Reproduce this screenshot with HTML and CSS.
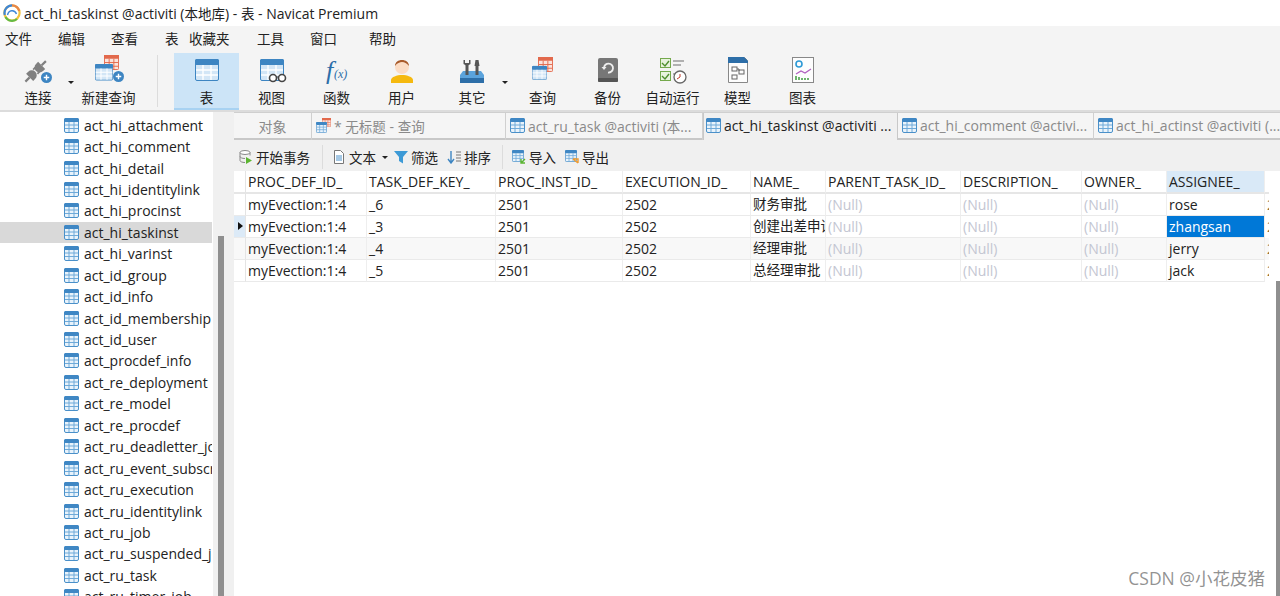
FILE: index.html
```html
<!DOCTYPE html>
<html lang="zh">
<head>
<meta charset="utf-8">
<title>act_hi_taskinst @activiti (本地库) - 表 - Navicat Premium</title>
<link rel="stylesheet" href="styles.css">
</head>
<body>
<svg class="defs" width="0" height="0">
  <symbol id="tbl" viewBox="0 0 15 15">
    <rect x=".5" y=".5" width="14" height="14" rx="1.5" fill="#e9f3fb" stroke="#4a90c9"/>
    <rect x="0" y="0" width="15" height="4" rx="1.5" fill="#3f87c4"/>
    <path d="M1 7h13M1 10.500h13M5 4v10M10 4v10" stroke="#6faad9" stroke-width="1" fill="none"/>
  </symbol>
  <symbol id="bigtbl" viewBox="0 0 24 24">
    <rect x=".5" y=".5" width="23" height="21" rx="1.5" fill="#d3e6f6" stroke="#3d85c2"/>
    <rect x="0" y="0" width="24" height="6" rx="1.500" fill="#3d85c2"/>
    <path d="M1 11h22M1 16h22M8 6v15M16 6v15" stroke="#fff" stroke-width="1.400" fill="none"/>
  </symbol>
  <symbol id="orangetbl" viewBox="0 0 16 16">
    <rect x=".5" y=".5" width="15" height="15" rx="1" fill="#fbe3dc" stroke="#e2694c"/>
    <rect x="0" y="0" width="16" height="4" fill="#e2694c"/>
    <path d="M1 8h14M1 12h14M5.500 4v11M10.500 4v11" stroke="#e2694c" fill="none"/>
  </symbol>
  <symbol id="plus" viewBox="0 0 10 10">
    <circle cx="5" cy="5" r="5" fill="#3d85c2"/>
    <path d="M2.500 5h5M5 2.500v5" stroke="#fff" stroke-width="1.300"/>
  </symbol>
</svg>

<header class="titlebar">
  <svg class="logo" viewBox="0 0 18 18" width="18" height="18">
    <circle cx="9" cy="9" r="7.600" fill="#fff" stroke="#f3c23c" stroke-width="2.200"/>
    <path d="M1.800 11A7.600 7.600 0 0 1 9 1.400" fill="none" stroke="#3e86d8" stroke-width="2.200"/>
    <path d="M9 1.400A7.600 7.600 0 0 1 16.200 7" fill="none" stroke="#e8864a" stroke-width="2.200"/>
    <path d="M2.400 13A7.600 7.600 0 0 0 14 15" fill="none" stroke="#62bb46" stroke-width="2.200"/>
    <path d="M4.500 11c1-5 7-6 9-1" fill="none" stroke="#3e86d8" stroke-width="1.400"/>
  </svg>
  <span>act_hi_taskinst @activiti (<span class="cn">本地库</span>) - <span class="cn">表</span> - Navicat Premium</span>
</header>

<nav class="menubar">
  <span class="m m1">文件</span><span class="m m2">编辑</span><span class="m m3">查看</span><span class="m m4">表</span><span class="m m5">收藏夹</span><span class="m m6">工具</span><span class="m m7">窗口</span><span class="m m8">帮助</span>
</nav>

<section class="toolbar">
  <div class="tool wide">
    <svg class="ic" viewBox="0 0 32 32"><g transform="rotate(-45 14 17)"><path d="M-1 17h6M22 17h6" stroke="#808080" stroke-width="2.200"/><path d="M5 12h3a5 5 0 0 1 0 10H5z" fill="#808080"/><path d="M22 12h-3a5 5 0 0 0 0 10h3z" fill="#808080"/><path d="M13 14h3M13 20h3" stroke="#808080" stroke-width="1.800"/></g><use href="#plus" x="19" y="18" width="11" height="11"/></svg>
    <span>连接</span><i class="caret"></i>
  </div>
  <div class="tool">
    <svg class="ic" viewBox="0 0 32 32"><use href="#orangetbl" x="11" y="1" width="15" height="15"/><use href="#bigtbl" x="2" y="10" width="18" height="18"/><use href="#plus" x="20" y="17" width="11" height="11"/></svg>
    <span>新建查询</span>
  </div>
  <div class="tsep"></div>
  <div class="tool active">
    <svg class="ic" viewBox="0 0 32 32"><use href="#bigtbl" x="4" y="5" width="24" height="24"/></svg>
    <span>表</span>
  </div>
  <div class="tool">
    <svg class="ic" viewBox="0 0 32 32"><use href="#bigtbl" x="4" y="5" width="24" height="24"/><circle cx="17" cy="24" r="3.500" fill="#fff" stroke="#444" stroke-width="1.600"/><circle cx="26" cy="24" r="3.500" fill="#fff" stroke="#444" stroke-width="1.600"/><path d="M20 23h3" stroke="#444"/></svg>
    <span>视图</span>
  </div>
  <div class="tool">
    <svg class="ic" viewBox="0 0 32 32"><text class="fx" x="5" y="25">f</text><text class="fx2" x="13" y="24">(x)</text></svg>
    <span>函数</span>
  </div>
  <div class="tool">
    <svg class="ic" viewBox="0 0 32 32"><path d="M5 29v-3c0-3 6-5 11-5s11 2 11 5v3z" fill="#f5b90f"/><circle cx="16" cy="13" r="7" fill="#fbdcc4"/><path d="M9 12c0-8 14-8 14 0-3-3-4-4-7-4-2 0-5 1-7 4z" fill="#a85a2a"/></svg>
    <span>用户</span>
  </div>
  <div class="tool wide">
    <svg class="ic" viewBox="0 0 32 32"><path d="M4 21l3-4h18l3 4v8H4z" fill="#5ba3dc"/><path d="M4 24h24v5H4z" fill="#2d6ea8"/><path d="M11 10v11M21 11v10" stroke="#555" stroke-width="3"/><path d="M7.500 6v4l3.500 2 3.500-2V6h-1.500v3h-4V6z" fill="#555"/><path d="M19.500 6h3l1 6h-5z" fill="#555"/></svg>
    <span>其它</span><i class="caret"></i>
  </div>
  <div class="tool">
    <svg class="ic" viewBox="0 0 32 32"><use href="#orangetbl" x="11" y="3" width="15" height="15"/><use href="#bigtbl" x="5" y="11" width="15" height="17"/></svg>
    <span>查询</span>
  </div>
  <div class="tool">
    <svg class="ic" viewBox="0 0 32 32"><rect x="6" y="4" width="20" height="24" rx="2" fill="#777"/><rect x="6" y="24" width="20" height="4" rx="1" fill="#555"/><path d="M12 14a4.500 4.500 0 1 1 4 4.500" fill="none" stroke="#eee" stroke-width="1.800"/><path d="M9.500 13h5l-2.500 3z" fill="#eee"/></svg>
    <span>备份</span>
  </div>
  <div class="tool">
    <svg class="ic" viewBox="0 0 32 32"><rect x="3.500" y="4.500" width="10" height="9" fill="#e8f3de" stroke="#74a94c"/><rect x="3.500" y="17.500" width="10" height="9" fill="#e8f3de" stroke="#74a94c"/><path d="M5 9l3 3 4-5M5 22l3 3 4-5" fill="none" stroke="#4f8f2e" stroke-width="1.400"/><path d="M16 7h11M16 11h8M16 20h4" stroke="#999" stroke-width="1.300"/><circle cx="23" cy="23" r="6" fill="#fff" stroke="#666" stroke-width="1.300"/><path d="M23 20v3l-3 2" fill="none" stroke="#c0392b"/></svg>
    <span>自动运行</span>
  </div>
  <div class="tool">
    <svg class="ic" viewBox="0 0 32 32"><path d="M6.500 3.500h16l3 3v22h-19z" fill="#fdfdfd" stroke="#888"/><path d="M6 3h16l4 4v2H6z" fill="#2d6ea8"/><rect x="10" y="13" width="5" height="4" fill="none" stroke="#666"/><rect x="17" y="16" width="5" height="4" fill="none" stroke="#666"/><rect x="10" y="21" width="5" height="4" fill="none" stroke="#666"/><path d="M15 15h2v2" fill="none" stroke="#666"/></svg>
    <span>模型</span>
  </div>
  <div class="tool">
    <svg class="ic" viewBox="0 0 32 32"><rect x="5.500" y="3.500" width="21" height="25" fill="#fdfdfd" stroke="#888"/><circle cx="12" cy="10" r="3" fill="none" stroke="#2d9ad6" stroke-width="1.600"/><path d="M9 20l5-3 4 2 6-4" fill="none" stroke="#b05fc0" stroke-width="1.200"/><path d="M9 26v-4M12 26v-3M15 26v-2M18 26v-2M21 26v-2" stroke="#4aa34a" stroke-width="1.600"/></svg>
    <span>图表</span>
  </div>
</section>

<div class="workspace">
  <aside class="tree">
    <ul class="tree-list">
      <li><svg class="ti"><use href="#tbl"/></svg>act_hi_actinst</li>
      <li><svg class="ti"><use href="#tbl"/></svg>act_hi_attachment</li>
      <li><svg class="ti"><use href="#tbl"/></svg>act_hi_comment</li>
      <li><svg class="ti"><use href="#tbl"/></svg>act_hi_detail</li>
      <li><svg class="ti"><use href="#tbl"/></svg>act_hi_identitylink</li>
      <li><svg class="ti"><use href="#tbl"/></svg>act_hi_procinst</li>
      <li class="sel"><svg class="ti"><use href="#tbl"/></svg>act_hi_taskinst</li>
      <li><svg class="ti"><use href="#tbl"/></svg>act_hi_varinst</li>
      <li><svg class="ti"><use href="#tbl"/></svg>act_id_group</li>
      <li><svg class="ti"><use href="#tbl"/></svg>act_id_info</li>
      <li><svg class="ti"><use href="#tbl"/></svg>act_id_membership</li>
      <li><svg class="ti"><use href="#tbl"/></svg>act_id_user</li>
      <li><svg class="ti"><use href="#tbl"/></svg>act_procdef_info</li>
      <li><svg class="ti"><use href="#tbl"/></svg>act_re_deployment</li>
      <li><svg class="ti"><use href="#tbl"/></svg>act_re_model</li>
      <li><svg class="ti"><use href="#tbl"/></svg>act_re_procdef</li>
      <li><svg class="ti"><use href="#tbl"/></svg>act_ru_deadletter_job</li>
      <li><svg class="ti"><use href="#tbl"/></svg>act_ru_event_subscr</li>
      <li><svg class="ti"><use href="#tbl"/></svg>act_ru_execution</li>
      <li><svg class="ti"><use href="#tbl"/></svg>act_ru_identitylink</li>
      <li><svg class="ti"><use href="#tbl"/></svg>act_ru_job</li>
      <li><svg class="ti"><use href="#tbl"/></svg>act_ru_suspended_job</li>
      <li><svg class="ti"><use href="#tbl"/></svg>act_ru_task</li>
      <li><svg class="ti"><use href="#tbl"/></svg>act_ru_timer_job</li>
    </ul>
  </aside>
  <div class="tree-scroll"><div class="thumb"></div></div>

  <main class="content">
    <div class="tabs">
      <div class="tab t0">对象</div>
      <div class="tab t1"><svg class="ti" viewBox="0 0 15 15"><use href="#orangetbl" x="6" y="0" width="9" height="9"/><use href="#tbl" x="0" y="4" width="11" height="11"/></svg><span>* <span class="cn">无标题</span> - <span class="cn">查询</span></span></div>
      <div class="tab t2"><svg class="ti"><use href="#tbl"/></svg><span>act_ru_task @activiti (<span class="cn">本</span>...</span></div>
      <div class="tab t3 on"><svg class="ti"><use href="#tbl"/></svg><span>act_hi_taskinst @activiti ...</span></div>
      <div class="tab t4"><svg class="ti"><use href="#tbl"/></svg><span>act_hi_comment @activi...</span></div>
      <div class="tab t5"><svg class="ti"><use href="#tbl"/></svg><span>act_hi_actinst @activiti (...</span></div>
    </div>

    <div class="actions">
      <div class="act a1"><svg class="ai" viewBox="0 0 14 14"><ellipse cx="6" cy="2.500" rx="5" ry="2" fill="#fff" stroke="#888"/><path d="M1 2.500v8c0 1 2 2 5 2M11 2.500v3M1 6.500c0 1 2 2 5 2" fill="none" stroke="#888"/><path d="M7 7l6 3.500-6 3.500z" fill="#5cb531"/></svg>开始事务</div>
      <div class="asep s1"></div>
      <div class="act a2"><svg class="ai" viewBox="0 0 14 14"><path d="M2.500.5h6l3 3v10h-9z" fill="#fff" stroke="#777"/><path d="M4 6h6M4 8h6M4 10h6" stroke="#4a90c9"/></svg>文本<i class="caret small"></i></div>
      <div class="act a3"><svg class="ai" viewBox="0 0 14 14"><path d="M0 1h14L9 7v6.500L5 11V7z" fill="#3d9ad6"/></svg>筛选</div>
      <div class="act a4"><svg class="ai" viewBox="0 0 14 14"><path d="M4 1v11M1 9l3 4 3-4" fill="none" stroke="#3d85c2" stroke-width="1.400"/><path d="M9 2h5M9 5h5M9 8h5M9 11h5" stroke="#777"/></svg>排序</div>
      <div class="asep s2"></div>
      <div class="act a5"><svg class="ai" viewBox="0 0 14 14"><use href="#tbl" width="12" height="12"/><path d="M13 13H9V9M9 13l4-4" fill="none" stroke="#5cb531" stroke-width="1.400"/></svg>导入</div>
      <div class="act a6"><svg class="ai" viewBox="0 0 14 14"><use href="#tbl" width="12" height="12"/><path d="M8 9h5v4M13 13L8 9" fill="none" stroke="#ee9a2e" stroke-width="1.400"/></svg>导出</div>
    </div>

    <div class="grid-wrap">
      <div class="grid">
        <div class="row head">
          <span class="gut"></span><span>PROC_DEF_ID_</span><span>TASK_DEF_KEY_</span><span>PROC_INST_ID_</span><span>EXECUTION_ID_</span><span>NAME_</span><span>PARENT_TASK_ID_</span><span>DESCRIPTION_</span><span>OWNER_</span><span class="hl">ASSIGNEE_</span><span class="cut"></span>
        </div>
        <div class="row">
          <span class="gut"></span><span>myEvection:1:4</span><span>_6</span><span>2501</span><span>2502</span><span class="zh">财务审批</span><span class="nul">(Null)</span><span class="nul">(Null)</span><span class="nul">(Null)</span><span>rose</span><span class="cut">2</span>
        </div>
        <div class="row">
          <span class="gut cur"></span><span>myEvection:1:4</span><span>_3</span><span>2501</span><span>2502</span><span class="zh">创建出差申请</span><span class="nul">(Null)</span><span class="nul">(Null)</span><span class="nul">(Null)</span><span class="picked">zhangsan</span><span class="cut">2</span>
        </div>
        <div class="row alt">
          <span class="gut"></span><span>myEvection:1:4</span><span>_4</span><span>2501</span><span>2502</span><span class="zh">经理审批</span><span class="nul">(Null)</span><span class="nul">(Null)</span><span class="nul">(Null)</span><span>jerry</span><span class="cut">2</span>
        </div>
        <div class="row">
          <span class="gut"></span><span>myEvection:1:4</span><span>_5</span><span>2501</span><span>2502</span><span class="zh">总经理审批</span><span class="nul">(Null)</span><span class="nul">(Null)</span><span class="nul">(Null)</span><span>jack</span><span class="cut">2</span>
        </div>
      </div>
      <div class="grid-scroll"></div>
    </div>
  </main>
</div>
<div class="watermark">CSDN @小花皮猪</div>
</body>
</html>
```
FILE: styles.css
```css
* { box-sizing: border-box; }
html, body { margin: 0; padding: 0; }
body {
  position: relative;
  width: 1280px;
  height: 596px;
  overflow: hidden;
  background: #f0f0f0;
  color: #1c1c1c;
  font: 14px "Open Sans", "Noto Sans CJK SC", sans-serif;
}
.defs { position: absolute; }
.cn { font-size: 13.5px; }

.titlebar { height: 26px; background: #fff; display: flex; align-items: center; gap: 3px; padding-left: 3px; font-size: 14px; color: #222; }
.logo { flex: none; }

.menubar { height: 24px; background: #f4f4f4; display: flex; align-items: center; font-size: 13.5px; line-height: 24px; color: #222; padding: 1px 0 0 5px; }
.m { flex: none; margin-right: 26px; }
.m3 { margin-right: 27px; }
.m4 { margin-right: 10.5px; }
.m5 { margin-right: 27.5px; }
.m7 { margin-right: 32px; }

.toolbar { height: 61px; background: #f4f4f4; border-bottom: 1px solid #dcdcdc; display: flex; font-size: 13.5px; color: #222; padding-top: 3px; }
.tool { width: 65px; height: 57px; display: flex; flex-direction: column; align-items: center; position: relative; flex: none; }
.tool.wide { width: 76px; }
.tool.active { background: #cce4f7; border-bottom: 2px solid #a8d2f2; }
.tool .ic { width: 32px; height: 32px; margin-top: 1px; }
.tool span { line-height: 20px; margin-top: 2px; }
.caret { position: absolute; right: 2px; top: 28px; width: 0; height: 0; border: 3px solid transparent; border-top: 3px solid #222; border-bottom: 0; }
.tsep { width: 33px; flex: none; position: relative; }
.tsep::after { content: ""; position: absolute; left: 16px; top: 2px; bottom: 3px; width: 1px; background: #dcdcdc; }
.fx { font: italic 26px "Liberation Serif", serif; fill: #2d6ea8; }
.fx2 { font: italic 12px "Liberation Serif", serif; fill: #2d6ea8; }

.workspace { height: 485px; display: flex; overflow: hidden; border-top: 1px solid #dcdcdc; }
.tree { width: 213px; background: #fff; overflow: hidden; flex: none; }
.tree-list { list-style: none; margin: -19px 0 0; padding: 0; }
.tree-list li { height: 21.45px; display: flex; align-items: center; padding-left: 64px; white-space: nowrap; overflow: hidden; color: #222; width: 212px; }
.tree-list li.sel { background: #d9d9d9; }
.ti { width: 15px; height: 15px; flex: none; margin-right: 5px; }
.tree-scroll { width: 13px; flex: none; background: #f0f0f0; padding: 124px 2px 0 5px; }
.thumb { height: 100%; background: #8f8f8f; }

.content { margin-left: 8px; flex: 1; min-width: 0; display: flex; flex-direction: column; }
.tabs { height: 28px; display: flex; background: #f5f5f5; border-top: 1px solid #cfcfcf; border-bottom: 2px solid #c8c8c8; flex: none; }
.tab { flex: none; height: 27px; display: flex; align-items: center; padding-left: 4px; color: #8a8a8a; white-space: nowrap; overflow: hidden; border-right: 1px solid #d0d0d0; margin-bottom: -2px; padding-bottom: 2px; }
.tab .ti { margin-right: 3px; }
.t0 { width: 78px; justify-content: center; padding-left: 0; }
.t1 { width: 194px; }
.t2 { width: 197px; }
.t3 { width: 195px; }
.t4 { width: 196px; }
.t5 { width: 186px; border-right: 0; }
.tab.on { background: #f0f0f0; color: #222; border-left: 1px solid #c8c8c8; border-right: 1px solid #c8c8c8; padding-left: 2px; }

.actions { height: 31px; display: flex; align-items: center; flex: none; font-size: 13.5px; color: #222; padding: 3px 0 0 5px; }
.act { display: flex; align-items: center; position: relative; flex: none; }
.ai { width: 14px; height: 14px; margin-right: 3px; flex: none; }
.asep { width: 1px; height: 24px; background: #dcdcdc; flex: none; }
.a1 { margin-right: 12px; }
.s1 { margin-right: 9px; }
.a2 { width: 62px; }
.caret.small { right: 6px; top: 9px; }
.a3 { width: 53px; }
.a4 { width: 55px; }
.s2 { margin-right: 9px; }
.a5 { width: 53px; }

.grid-wrap { flex: 1; background: #fff; position: relative; min-height: 0; }
.grid { width: 1035px; }
.row { display: grid; grid-template-columns: 12px 121px 129px 127px 128px 75px 135px 121px 85px 98px 4px; height: 22px; line-height: 21px; background: #fff; }
.row.alt { background: #f8f8f8; }
.row > span { padding-left: 2px; white-space: nowrap; overflow: hidden; border-right: 1px solid #eee; border-bottom: 1px solid #eaeaea; color: #222; }
.row.head { height: 23px; line-height: 22px; }
.row.head > span { border-bottom: 2px solid #e6e6e6; }
.row .gut { padding: 0; position: relative; border-right: 1px solid #e4e4e4; }
.row .gut.cur { background: #dceaf7; }
.row .gut.cur::after { content: ""; position: absolute; left: 4px; top: 6px; border: 4px solid transparent; border-left: 5px solid #111; border-right: 0; }
.row .hl { background: #d9e9f7; }
.row .nul { color: #c3c6d2; }
.row .zh { font-size: 13.5px; }
.row .picked { background: #0078d7; color: #fff; }
.row > .cut { border: 0; padding-left: 2px; color: #8a6a3a; }
.grid-scroll { position: absolute; right: 0; top: 110px; bottom: 0; width: 4px; background: #8f8f8f; }

.watermark { position: absolute; right: 15px; bottom: 7px; font-size: 17.5px; line-height: 22px; color: rgba(110, 110, 110, .75); }
```
